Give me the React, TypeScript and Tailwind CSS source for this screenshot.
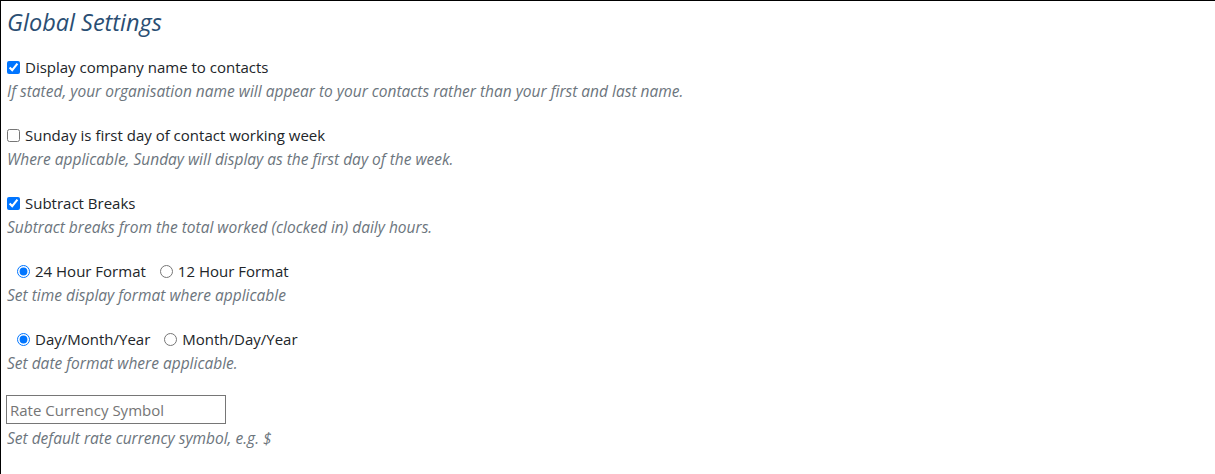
import React from "react";

const font = { fontFamily: '"Open Sans", "Noto Sans", sans-serif' };

function Desc({ children, className = "" }: { children: React.ReactNode; className?: string }) {
  return <div className={`text-[15.5px] italic leading-[24px] text-[#6c757d] ${className}`}>{children}</div>;
}

function Check({ label, checked }: { label: string; checked: boolean }) {
  return (
    <label className="flex h-[24px] items-center gap-[5px] text-[15px] text-[#212529]">
      <input type="checkbox" defaultChecked={checked} className="m-0 h-[13px] w-[13px]" />
      <span>{label}</span>
    </label>
  );
}

function Radio({ name, label, checked }: { name: string; label: string; checked: boolean }) {
  return (
    <label className="flex items-center gap-[5px]">
      <input type="radio" name={name} defaultChecked={checked} className="m-0 h-[13px] w-[13px]" />
      <span>{label}</span>
    </label>
  );
}

export default function App() {
  return (
    <div className="h-[474px] w-[1215px] border-l border-t border-black bg-white px-[6px]" style={font}>
      <h2 className="mt-[6px] mb-[18px] text-[23.5px] italic leading-[30px] text-[#2a4e73]">Global Settings</h2>
      <div className="flex flex-col gap-[20px]">
        <div>
          <Check label="Display company name to contacts" checked />
          <Desc>If stated, your organisation name will appear to your contacts rather than your first and last name.</Desc>
        </div>
        <div>
          <Check label="Sunday is first day of contact working week" checked={false} />
          <Desc>Where applicable, Sunday will display as the first day of the week.</Desc>
        </div>
        <div>
          <Check label="Subtract Breaks" checked />
          <Desc>Subtract breaks from the total worked (clocked in) daily hours.</Desc>
        </div>
        <div>
          <div className="flex h-[24px] items-center gap-[14px] pl-[10px] text-[15px] text-[#212529]">
            <Radio name="time" label="24 Hour Format" checked />
            <Radio name="time" label="12 Hour Format" checked={false} />
          </div>
          <Desc>Set time display format where applicable</Desc>
        </div>
        <div>
          <div className="flex h-[24px] items-center gap-[14px] pl-[10px] text-[15px] text-[#212529]">
            <Radio name="date" label="Day/Month/Year" checked />
            <Radio name="date" label="Month/Day/Year" checked={false} />
          </div>
          <Desc>Set date format where applicable.</Desc>
        </div>
        <div>
          <input
            type="text"
            placeholder="Rate Currency Symbol"
            className="-ml-px block h-[29px] w-[220px] border border-[#767676] px-[3px] text-[15px] text-[#212529] placeholder:text-[#757575] outline-none"
          />
          <Desc className="mt-[2px]">Set default rate currency symbol, e.g. $</Desc>
        </div>
      </div>
    </div>
  );
}
